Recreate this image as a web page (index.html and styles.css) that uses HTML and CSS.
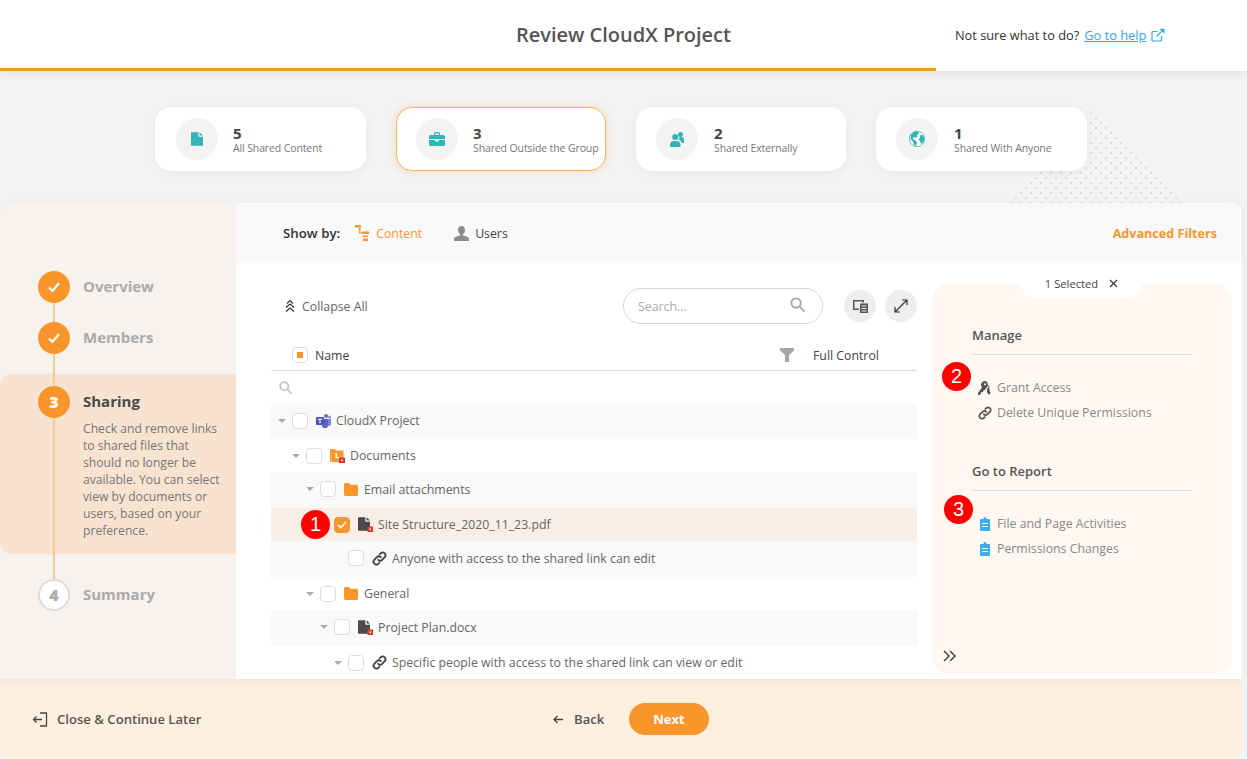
FILE: index.html
```html
<!doctype html>
<html>
	<head>
		<meta name="viewport" content="width=device-width, initial-scale=1.0">
		<title>Review CloudX Project</title>
		<link rel="stylesheet" href="styles.css">
	</head>
	<body>
		<svg class="defs" width="0" height="0">
			<symbol id="i-file" viewBox="0 0 14 16"><path d="M1 0h7.500v4.500a1 1 0 0 0 1 1H14V16H1a1 1 0 0 1-1-1V1a1 1 0 0 1 1-1zM10 0l4 4h-4z"/></symbol>
			<symbol id="i-link" viewBox="0 0 16 16"><path fill="none" stroke="currentColor" stroke-width="2" stroke-linecap="round" d="M6.600 9.400a3 3 0 0 0 4.200 0l3-3a3 3 0 0 0-4.200-4.200L8.400 3.400M9.400 6.600a3 3 0 0 0-4.200 0l-3 3a3 3 0 0 0 4.200 4.200l1.200-1.200"/></symbol>
			<symbol id="i-folder" viewBox="0 0 15 14"><path d="M1.500 0h4l1.500 2h6.500A1.500 1.500 0 0 1 15 3.500v9a1.500 1.500 0 0 1-1.500 1.500h-12A1.500 1.500 0 0 1 0 12.500v-11A1.500 1.500 0 0 1 1.500 0z"/></symbol>
			<symbol id="i-clip" viewBox="0 0 10 14"><path d="M3.500 2V1.500a1.500 1.500 0 0 1 3 0V2H9a1 1 0 0 1 1 1v10a1 1 0 0 1-1 1H1a1 1 0 0 1-1-1V3a1 1 0 0 1 1-1z"/><path fill="#fff" d="M2 6h6v1H2zM2 9h6v1H2z"/></symbol>
		</svg>

		<!-- HEADER -->
		<header class="topbar">
			<div></div>
			<h1 class="title">Review CloudX Project</h1>
			<div class="help">
				Not sure what to do? <a class="help__link">Go to help</a>
				<svg viewBox="0 0 14 14" width="14" height="14" fill="none" stroke="#2ea8ee" stroke-width="1.200"><path d="M10.500 8v4a1 1 0 0 1-1 1H2a1 1 0 0 1-1-1V4.500a1 1 0 0 1 1-1h4.500"/><path d="M5.500 8.500 12.500 1.500"/><path fill="#2ea8ee" stroke="none" d="M8.500.8h5v5z"/></svg>
			</div>
			<div class="progress" style="width: 936px"></div>
		</header>

		<!-- STATS -->
		<section class="stats">
			<div class="dots"></div>
			<div class="stat stat--first">
				<span class="stat__icon"><svg width="12" height="14" fill="#35b4b8"><use href="#i-file"/></svg></span>
				<div class="stat__text"><b class="stat__num">5</b><span class="stat__label">All Shared Content</span></div>
			</div>
			<div class="stat stat--active">
				<span class="stat__icon">
					<svg width="16" height="14" viewBox="0 0 16 14" fill="#35b4b8"><path d="M5 3V1.500A1.500 1.500 0 0 1 6.500 0h3A1.500 1.500 0 0 1 11 1.500V3h3.500A1.500 1.500 0 0 1 16 4.500V7H0V4.500A1.500 1.500 0 0 1 1.500 3zm1.200 0h3.600V1.200H6.200zM0 8h6v1.500h4V8h6v4.500a1.500 1.500 0 0 1-1.500 1.500h-13A1.500 1.500 0 0 1 0 12.500z"/></svg>
				</span>
				<div class="stat__text"><b class="stat__num">3</b><span class="stat__label">Shared Outside the Group</span></div>
			</div>
			<div class="stat stat--narrow">
				<span class="stat__icon">
					<svg width="14" height="16" viewBox="0 0 14 16" fill="#35b4b8"><circle cx="5.200" cy="6" r="3"/><circle cx="10.500" cy="3.500" r="2.500"/><path d="M0 16v-2.500A4 4 0 0 1 4 10h2.500a4 4 0 0 1 4 3.500V16zM8.500 8.500a3.800 3.800 0 0 0 1-2.500h1.500A3 3 0 0 1 14 9v3h-2.300a5.500 5.500 0 0 0-3.200-3.500z"/></svg>
				</span>
				<div class="stat__text"><b class="stat__num">2</b><span class="stat__label">Shared Externally</span></div>
			</div>
			<div class="stat">
				<span class="stat__icon">
					<svg width="16" height="18" viewBox="0 0 16 18"><circle cx="8" cy="9" r="7.700" fill="#fff" stroke="#35b4b8" stroke-width=".8"/><path fill="#35b4b8" d="M5 2 9 1.600l1 2-2 1.400.5 1.500-2 1.500-1-1-1.500.5.500 2 2.500 1 1 2.500-1 3L5 15l-1-3.500L1.500 9l.3-4zM11 5l3.500.5.800 4-1.300 3-2 1.500-1-3-1.500-1.500 1.500-1.500z"/></svg>
				</span>
				<div class="stat__text"><b class="stat__num">1</b><span class="stat__label">Shared With Anyone</span></div>
			</div>
		</section>

		<!-- WIZARD -->
		<main class="wizard">
			<nav class="steps">
				<div class="steps__line"></div>
				<div class="step step--done">
					<span class="step__dot"><svg width="14" height="12" viewBox="0 0 14 12" fill="none" stroke="#fff" stroke-width="2"><path d="M2 6.500 5.500 10 12 2"/></svg></span>
					<span class="step__name">Overview</span>
				</div>
				<div class="step step--done">
					<span class="step__dot"><svg width="14" height="12" viewBox="0 0 14 12" fill="none" stroke="#fff" stroke-width="2"><path d="M2 6.500 5.500 10 12 2"/></svg></span>
					<span class="step__name">Members</span>
				</div>
				<div class="step step--active">
					<span class="step__dot">3</span>
					<div>
						<span class="step__name">Sharing</span>
						<p class="step__text">Check and remove links to shared files that should no longer be available. You can select view by documents or users, based on your preference.</p>
					</div>
				</div>
				<div class="step step--todo">
					<span class="step__dot">4</span>
					<span class="step__name">Summary</span>
				</div>
			</nav>

			<div class="content">
				<div class="showby">
					<b class="showby__label">Show by:</b>
					<a class="showby__item showby__item--on">
						<svg width="14" height="16" viewBox="0 0 14 16" fill="#f9962b"><path d="M0 0h6v2.500H0zM7 6.500h7V9H7zM8 10.500h5V12H8zM8 13.500h5V16H8z"/><path d="M4 2.500h1.500v5H7v1H4z"/></svg>
						Content
					</a>
					<a class="showby__item showby__item--user">
						<svg width="15" height="15" viewBox="0 0 15 15" fill="#8c8c8c"><path d="M7.500 0C9.500 0 11 1.600 11 4c0 2-1 3.500-2 4.300V9.500c2.500.5 6 1.500 6 3.500v2H0v-2c0-2 3.500-3 6-3.500V8.300C5 7.500 4 6 4 4c0-2.400 1.500-4 3.500-4z"/></svg>
						Users
					</a>
					<a class="showby__filters">Advanced Filters</a>
				</div>

				<div class="work">
					<section class="tree">
						<div class="tools">
							<a class="collapse">
								<svg width="10" height="14" viewBox="0 0 10 14" fill="none" stroke="#333" stroke-width="1.200"><path d="M2 4.500 5 1.500l3 3M1 8.500 5 5l4 3.500M1 12.500 5 9l4 3.500"/></svg>
								Collapse All
							</a>
							<div class="search">
								<span>Search...</span>
								<svg class="search__icon" width="15" height="15" viewBox="0 0 16 16" fill="none" stroke="#a6a6a6" stroke-width="2"><circle cx="6.500" cy="6.500" r="5"/><path d="m10.500 10.500 5 5"/></svg>
							</div>
							<span class="round">
								<svg width="15" height="14" viewBox="0 0 15 14" fill="#555"><path d="M0 1h11v2.500H9.500V2.500h-8v7H6V11H0z"/><path d="M7 4.500h8V14H7zM8.500 6.500v1h5v-1zm0 2.500v1h5V9zm0 2.500v1h5v-1z"/></svg>
							</span>
							<span class="round">
								<svg width="14" height="14" viewBox="0 0 14 14" fill="none" stroke="#333" stroke-width="1.200"><path d="M1.500 12.500 12.500 1.500M8 1h5v5M1 8v5h5"/></svg>
							</span>
						</div>

						<div class="grid-head">
							<span class="check check--mixed"></span>
							<span class="grid-head__name">Name</span>
							<svg class="grid-head__funnel" width="14" height="14" viewBox="0 0 14 14" fill="#a6a6a6"><path d="M0 0h14v2.500L9 7v7H5V7L0 2.500z"/></svg>
							<span class="grid-head__col">Full Control</span>
						</div>
						<div class="grid-filter">
							<svg width="13" height="13" viewBox="0 0 16 16" fill="none" stroke="#c4c4c4" stroke-width="2.200"><circle cx="6.500" cy="6.500" r="5"/><path d="m10.500 10.500 5 5"/></svg>
						</div>

						<div class="row row--alt row--h35">
							<i class="caret"></i><span class="check"></span>
							<svg class="row__icon" width="15" height="14" viewBox="0 0 15 14"><circle cx="10" cy="2" r="2" fill="#6a6fc9"/><circle cx="13.500" cy="3" r="1.500" fill="#8b8fd8"/><path fill="#7b83d6" d="M11.500 5H15v5a2 2 0 0 1-3.500 1.300z"/><path fill="#5e64bf" d="M4 5h8v6a3 3 0 0 1-6 .5L4 10z"/><rect x="0" y="3" width="8" height="8" rx="1" fill="#4b53bc"/><path fill="#fff" d="M1.800 4.800h4.400v1H4.500v3.600h-1V5.800H1.800z"/></svg>
							<span>CloudX Project</span>
						</div>
						<div class="row row--l1 row--h33">
							<i class="caret"></i><span class="check"></span>
							<svg class="row__icon" width="15" height="15" viewBox="0 0 15 15"><path fill="#f9962b" d="M0 1h5l1 1.500h7.500V4H1.500v9.500H0z"/><path fill="#f9962b" d="M1.500 4H13.500v6.500H10V14H1.500z"/><path fill="#fff" d="M5.500 5H7v4h3v1.200H5.500z"/><rect x="9" y="9.500" width="6" height="5.500" fill="#e03a27"/><rect x="11.200" y="11.500" width="1.600" height="1.600" fill="#fff"/></svg>
							<span>Documents</span>
						</div>
						<div class="row row--alt row--l2 row--h36">
							<i class="caret"></i><span class="check"></span>
							<svg class="row__icon row__icon--folder" width="14" height="13" fill="#f9962b"><use href="#i-folder"/></svg>
							<span>Email attachments</span>
						</div>
						<div class="row row--sel row--l3 row--h33">
							<i class="caret caret--none"></i><span class="check check--on"><svg width="10" height="8" viewBox="0 0 10 8" fill="none" stroke="#fff" stroke-width="1.600"><path d="M1 4l2.700 2.700L9 1"/></svg></span>
							<svg class="row__icon" width="15" height="15" viewBox="0 0 15 15"><use href="#i-file" width="12" height="14" fill="#4a4a4a"/><rect x="9.500" y="9.500" width="5.500" height="5.500" fill="#e03a27"/><rect x="11.500" y="11.500" width="1.500" height="1.500" fill="#fff"/></svg>
							<span>Site Structure_2020_11_23.pdf</span>
						</div>
						<div class="row row--alt row--l4 row--h36">
							<i class="caret caret--none"></i><span class="check"></span>
							<svg class="row__icon row__icon--link" width="15" height="15"><use href="#i-link"/></svg>
							<span>Anyone with access to the shared link can edit</span>
						</div>
						<div class="row row--l2 row--h33">
							<i class="caret"></i><span class="check"></span>
							<svg class="row__icon row__icon--folder" width="14" height="13" fill="#f9962b"><use href="#i-folder"/></svg>
							<span>General</span>
						</div>
						<div class="row row--alt row--l3 row--h36">
							<i class="caret"></i><span class="check"></span>
							<svg class="row__icon" width="15" height="15" viewBox="0 0 15 15"><use href="#i-file" width="12" height="14" fill="#4a4a4a"/><rect x="9.500" y="9.500" width="5.500" height="5.500" fill="#e03a27"/><rect x="11.500" y="11.500" width="1.500" height="1.500" fill="#fff"/></svg>
							<span>Project Plan.docx</span>
						</div>
						<div class="row row--l4 row--h33">
							<i class="caret"></i><span class="check"></span>
							<svg class="row__icon row__icon--link" width="15" height="15"><use href="#i-link"/></svg>
							<span>Specific people with access to the shared link can view or edit</span>
						</div>
						<span class="badge badge--1">1</span>
					</section>

					<aside class="panel">
						<div class="panel__tab">
							1 Selected
							<svg width="9" height="9" viewBox="0 0 9 9" fill="none" stroke="#444" stroke-width="1.400"><path d="m1 1 7 7M8 1 1 8"/></svg>
						</div>
						<h2 class="panel__head">Manage</h2>
						<a class="action">
							<svg width="14" height="14" viewBox="0 0 14 14" fill="#555"><path d="M6 0a4 4 0 0 1 4 4 4 4 0 0 1-2.500 3.700L7 9 5.500 9.500 5 11 3.500 11 2 14H0v-2l4-5.500A4 4 0 0 1 6 0zm1 2.200a1 1 0 1 0 0 2 1 1 0 0 0 0-2z"/><path d="M10.500 3.500A4 4 0 0 1 11 8l1 1-.5 1.500 1 1-.5 1.500-1 .7-2-2.200V8.500A5 5 0 0 0 10.500 3.500z"/></svg>
							Grant Access
						</a>
						<a class="action">
							<svg class="action__link" width="14" height="14"><use href="#i-link"/></svg>
							Delete Unique Permissions
						</a>
						<h2 class="panel__head panel__head--2">Go to Report</h2>
						<a class="action">
							<svg class="action__clip" width="10" height="14" fill="#3aaef0"><use href="#i-clip"/></svg>
							File and Page Activities
						</a>
						<a class="action">
							<svg class="action__clip" width="10" height="14" fill="#3aaef0"><use href="#i-clip"/></svg>
							Permissions Changes
						</a>
						<svg class="panel__more" width="14" height="12" viewBox="0 0 14 12" fill="none" stroke="#444" stroke-width="1.500"><path d="m1 1 5 5-5 5M7 1l5 5-5 5"/></svg>
						<span class="badge badge--2">2</span>
						<span class="badge badge--3">3</span>
					</aside>
				</div>
			</div>
		</main>

		<!-- FOOTER -->
		<footer class="footer">
			<a class="footer__close">
				<svg width="16" height="15" viewBox="0 0 16 15" fill="none" stroke="#444" stroke-width="1.300"><path d="M8 1h6.500v13H8M1.500 7.500H10M4.500 4.500l-3 3 3 3"/></svg>
				Close &amp; Continue Later
			</a>
			<a class="footer__back">
				<svg width="10" height="9" viewBox="0 0 10 9" fill="none" stroke="#444" stroke-width="1.300"><path d="M10 4.500H1.500M4.500 1 1 4.500 4.500 8"/></svg>
				Back
			</a>
			<a class="footer__next">Next</a>
		</footer>
	</body>
</html>
```

FILE: styles.css
```css
* {
	box-sizing: border-box;
}
body {
	margin: 0;
	height: 759px;
	overflow: hidden;
	font-family: "Open Sans", sans-serif;
	font-size: 12.3px;
	color: #555;
	background-color: #f3f3f3;
}
.defs {
	position: absolute;
}
svg {
	flex: none;
}

/* header */
.topbar {
	position: relative;
	display: grid;
	grid-template-columns: 1fr auto 1fr;
	align-items: center;
	height: 71px;
	padding-bottom: 3px;
	background-color: #fff;
	box-shadow: 0 2px 8px rgba(0,0,0,0.08);
}
.title {
	margin: 0;
	font-family: "Open Sans", sans-serif;
	font-size: 20px;
	font-weight: 600;
	color: #555;
}
.help {
	display: flex;
	align-items: center;
	gap: 5px;
	padding: 2px 0 0 224px;
	font-size: 12.8px;
	color: #333;
}
.help__link {
	color: #2ea8ee;
	text-decoration: underline;
}
.progress {
	position: absolute;
	left: 0;
	bottom: 0;
	height: 3px;
	background-color: #f9962b;
}

/* stat cards */
.stats {
	position: relative;
	display: flex;
	gap: 30px;
	height: 132px;
	padding: 36px 0 0 155px;
}
.dots {
	position: absolute;
	left: 1006px;
	top: 37px;
	width: 178px;
	height: 95px;
	background-image: radial-gradient(circle, #d9d9d9 1px, transparent 1.500px), radial-gradient(circle, #d9d9d9 1px, transparent 1.500px);
	background-size: 10px 10px;
	background-position: 0 0, 5px 5px;
	clip-path: polygon(50% 0, 100% 100%, 0 100%);
}
.stat {
	position: relative;
	display: flex;
	align-items: center;
	gap: 16px;
	width: 211px;
	height: 64px;
	padding-left: 20px;
	border-radius: 16px;
	background-color: #fff;
	box-shadow: 0 2px 8px rgba(0,0,0,0.05);
}
.stat--first {
	gap: 15px;
	padding-left: 21px;
}
.stat--narrow {
	width: 210px;
}
.stat--active {
	width: 210px;
	gap: 15px;
	padding-left: 19px;
	border: 1px solid #fbb264;
	box-shadow: 0 0 8px rgba(249,150,43,0.3);
}
.stat__icon {
	display: flex;
	align-items: center;
	justify-content: center;
	flex: none;
	width: 42px;
	height: 42px;
	border-radius: 50%;
	background-color: #f3f3f3;
}
.stat__text {
	padding-top: 4px;
}
.stat__num {
	display: block;
	font-size: 15px;
	line-height: 15px;
	color: #444;
}
.stat__label {
	display: block;
	font-size: 10.5px;
	letter-spacing: -0.12px;
	line-height: 15px;
	color: #777;
	white-space: nowrap;
}

/* wizard */
.wizard {
	position: relative;
	display: flex;
	width: 1242px;
	height: 476px;
	border-radius: 10px 10px 0 0;
	overflow: hidden;
	box-shadow: 0 2px 8px rgba(0,0,0,0.06);
}
.steps {
	position: relative;
	width: 236px;
	padding-top: 68px;
	background-color: #f7f2ee;
}
.steps__line {
	position: absolute;
	z-index: 1;
	left: 53px;
	top: 84px;
	width: 2px;
	height: 308px;
	background-color: #fcc88f;
}
.step {
	position: relative;
	display: flex;
	align-items: center;
	gap: 13px;
	height: 32px;
	padding-left: 38px;
	margin-bottom: 19px;
}
.step__dot {
	position: relative;
	z-index: 2;
	display: flex;
	align-items: center;
	justify-content: center;
	flex: none;
	width: 32px;
	height: 32px;
	border-radius: 50%;
	font-size: 16px;
	font-weight: 800;
	color: #fff;
	background-color: #f9962b;
}
.step__name {
	padding-bottom: 2px;
	font-size: 15px;
	font-weight: 700;
	color: #aaa;
}
.step--active {
	align-items: flex-start;
	height: 180px;
	margin-top: 20px;
	margin-bottom: 25px;
	padding-top: 12px;
	border-radius: 12px 0 0 12px;
	background-color: #f7e3cf;
}
.step--active .step__name {
	display: block;
	margin-top: 5px;
	padding-bottom: 0;
	color: #4a4a4a;
}
.step__text {
	margin: 9px 0 0;
	width: 145px;
	font-size: 12.15px;
	line-height: 17px;
	color: #777;
}
.step--todo .step__dot {
	border: 2px solid #ddd;
	color: #aaa;
	background-color: #fff;
}

.content {
	flex: 1;
	background-color: #fff;
}
.showby {
	display: flex;
	align-items: center;
	height: 60px;
	padding: 0 25px 0 47px;
	background-color: #f9f9f9;
}
.showby__label {
	font-size: 13.3px;
	font-weight: 600;
	color: #333;
	margin-right: 15px;
}
.showby__item {
	display: flex;
	align-items: center;
	gap: 7px;
	margin-right: 32px;
	color: #444;
}
.showby__item--on {
	color: #f9962b;
}
.showby__item--user {
	gap: 6px;
}
.showby__filters {
	margin-left: auto;
	font-size: 12.6px;
	font-weight: 700;
	color: #f9962b;
}

.work {
	position: relative;
	display: flex;
	height: 416px;
}

/* tree */
.tree {
	position: relative;
	width: 646px;
	margin-left: 35px;
}
.tools {
	display: flex;
	align-items: center;
	height: 61px;
	padding-top: 25px;
	padding-left: 14px;
}
.collapse {
	display: flex;
	align-items: center;
	gap: 7px;
	width: 338px;
	color: #666;
}
.search {
	display: flex;
	align-items: center;
	justify-content: space-between;
	width: 200px;
	height: 36px;
	padding: 0 17px 0 14px;
	margin-right: 21px;
	border: 1px solid #d8d8d8;
	border-radius: 18px;
	color: #aaa;
}
.search__icon {
	margin-top: -3px;
}
.round {
	display: flex;
	align-items: center;
	justify-content: center;
	width: 32px;
	height: 32px;
	margin-right: 9px;
	border-radius: 50%;
	background-color: #eee;
}
.round:last-child {
	margin-right: 0;
}
.grid-head {
	display: flex;
	align-items: center;
	height: 47px;
	padding: 16px 0 0 21px;
	border-bottom: 1px solid #ddd;
	color: #444;
}
.grid-head__name {
	margin-left: 7px;
	width: 465px;
}
.grid-head__funnel {
	margin-right: 19px;
}
.grid-filter {
	display: flex;
	align-items: center;
	height: 33px;
	padding-left: 8px;
}
.check {
	display: flex;
	align-items: center;
	justify-content: center;
	flex: none;
	width: 16px;
	height: 16px;
	border: 1px solid #ddd;
	border-radius: 4px;
	background-color: #fff;
}
.check--mixed::after {
	content: "";
	width: 6px;
	height: 6px;
	background-color: #f9962b;
}
.check--on {
	border-color: #f9962b;
	background-color: #f9962b;
}
.row {
	display: flex;
	align-items: center;
	padding-left: 7px;
	white-space: nowrap;
	color: #666;
}
.row--h33 { height: 33px; }
.row--h35 { height: 35px; padding-bottom: 2px; }
.row--h36 { height: 36px; padding-bottom: 2px; }
.row--l1 { padding-left: 21px; }
.row--l2 { padding-left: 35px; }
.row--l3 { padding-left: 49px; }
.row--l4 { padding-left: 63px; }
.row--alt {
	background-color: #f9f9f9;
}
.row--sel {
	background-color: #f7efe7;
}
.caret {
	flex: none;
	width: 0;
	height: 0;
	margin-right: 6px;
	border: 4px solid transparent;
	border-top: 4px solid #aaa;
	border-bottom: 0;
}
.caret--none {
	visibility: hidden;
}
.row__icon {
	margin: 0 5px 0 8px;
}
.row__icon--folder {
	margin-right: 6px;
}
.row__icon--link {
	color: #444;
}

/* annotation badges */
.badge {
	position: absolute;
	display: flex;
	align-items: center;
	justify-content: center;
	width: 29px;
	height: 29px;
	border-radius: 50%;
	font-family: "Liberation Sans", sans-serif;
	font-size: 20px;
	color: #fff;
	background-color: #f00;
}
.badge--1 { left: 30px; top: 247px; }
.badge--2 { left: 10px; top: 78px; }
.badge--3 { left: 12px; top: 211px; }

/* selected panel */
.panel {
	position: relative;
	width: 300px;
	height: 389px;
	margin: 21px 0 0 15px;
	padding: 42px 40px 0;
	border-radius: 16px;
	background-color: #fff8f2;
}
.panel__tab {
	position: absolute;
	left: 89px;
	top: -14px;
	display: flex;
	align-items: center;
	justify-content: center;
	gap: 11px;
	width: 121px;
	height: 28px;
	padding-bottom: 2px;
	border-radius: 0 0 14px 14px;
	font-size: 11.2px;
	color: #444;
	background-color: #fff;
}
.panel__head {
	height: 29px;
	margin: 0 0 20px;
	border-bottom: 1px solid #ddd;
	font-size: 13px;
	font-weight: 600;
	color: #555;
}
.panel__head--2 {
	margin-top: 37px;
}
.action {
	display: flex;
	align-items: center;
	gap: 5px;
	height: 25px;
	padding-left: 6px;
	color: #888;
}
.action__link {
	color: #555;
}
.action__clip {
	margin: 0 2px;
}
.panel__more {
	position: absolute;
	left: 11px;
	bottom: 11px;
}

/* footer */
.footer {
	display: flex;
	align-items: center;
	width: 1242px;
	height: 80px;
	padding-left: 32px;
	border-radius: 0 0 10px 10px;
	font-size: 13.1px;
	font-weight: 600;
	color: #555;
	background-color: #ffefdf;
}
.footer__close {
	display: flex;
	align-items: center;
	gap: 9px;
	width: 521px;
}
.footer__back {
	display: flex;
	align-items: center;
	gap: 11px;
	width: 76px;
}
.footer__next {
	width: 80px;
	height: 32px;
	border-radius: 16px;
	line-height: 32px;
	text-align: center;
	font-weight: 700;
	color: #fff;
	background-color: #f9962b;
}
```
